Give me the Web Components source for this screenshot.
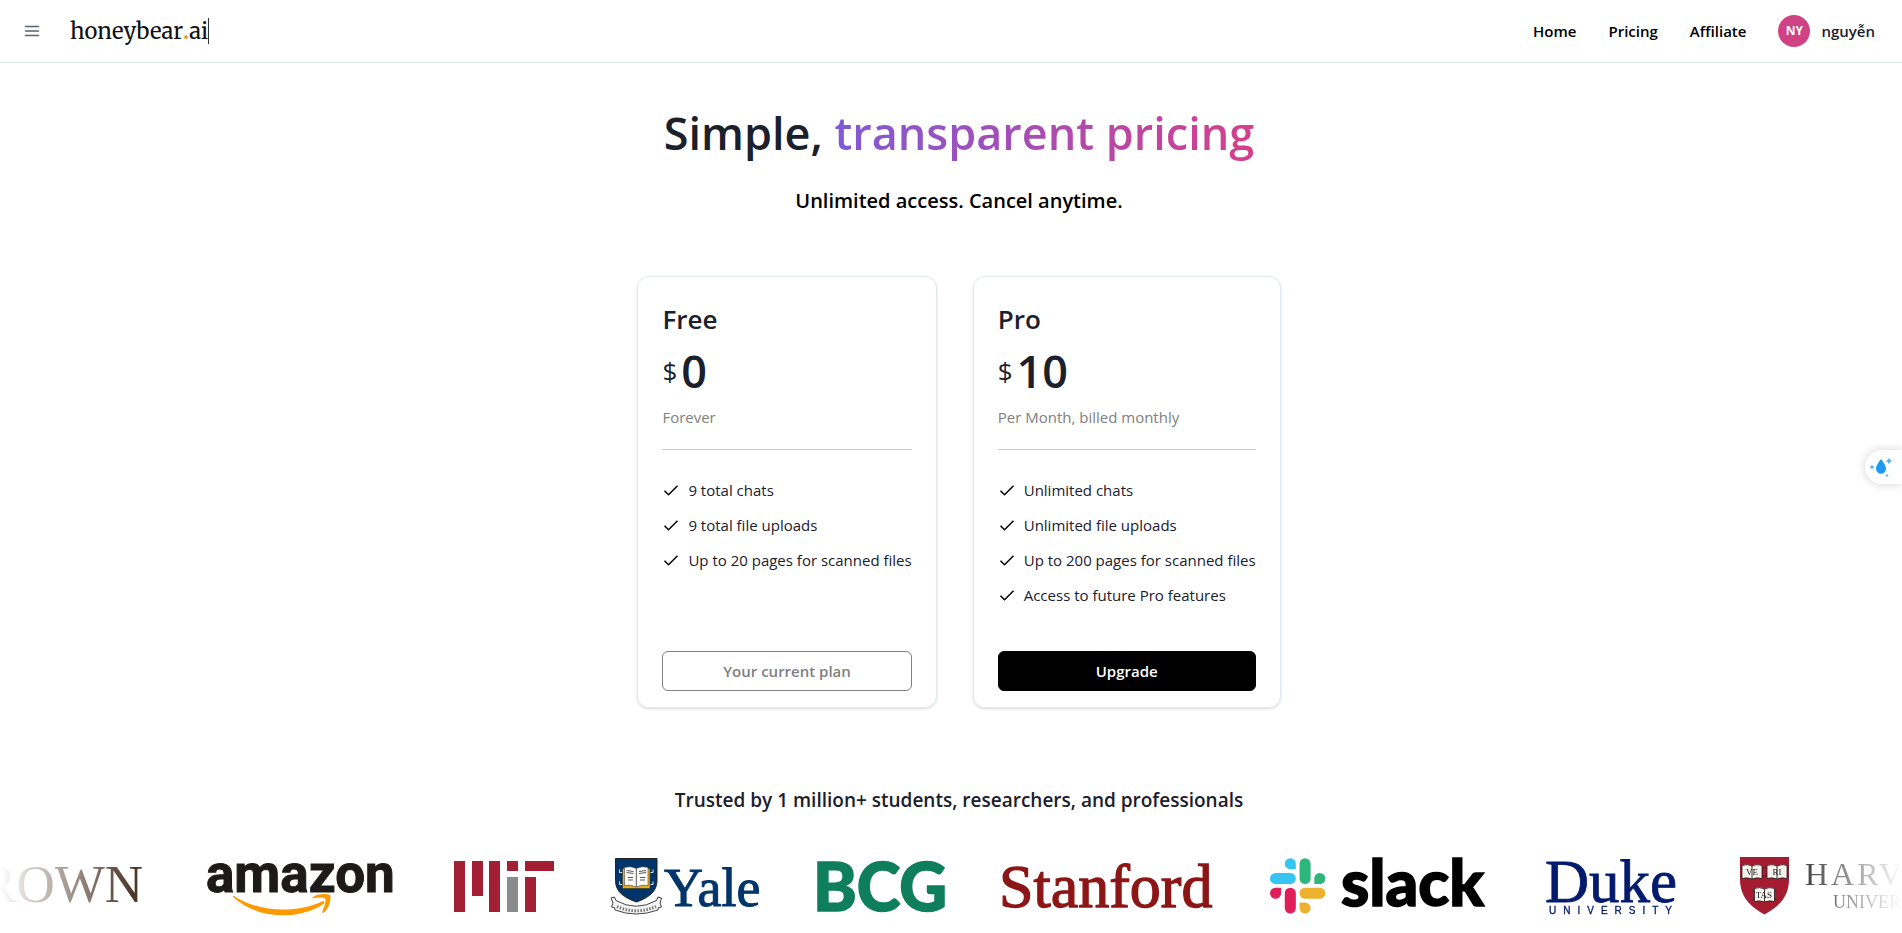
<!DOCTYPE html>
<html lang="en">
<head>
<meta charset="utf-8">
<meta name="viewport" content="width=device-width, initial-scale=1">
<title>Pricing - honeybear.ai</title>
<style>
:root {
  --ink: #1a202c;
  --line: #e2e8f0;
  --muted: #808080;
  --pink: #d53f8c;
  --purple: #805ad5;
}
body {
  margin: 0;
  background: #fff;
  color: var(--ink);
  font-family: "Segoe UI", "Open Sans", "Noto Sans", sans-serif;
  font-size: 15px;
  line-height: 24px;
  overflow-x: hidden;
}
main {
  padding-left: 16px;
}
</style>
</head>
<body>
<site-header>
  <nav-link href="#home">Home</nav-link>
  <nav-link href="#pricing">Pricing</nav-link>
  <nav-link href="#affiliate">Affiliate</nav-link>
  <user-badge slot="user" initials="NY">nguyễn</user-badge>
</site-header>

<main>
  <page-hero>
    Simple, <span slot="accent">transparent pricing</span>
    <span slot="sub">Unlimited access. Cancel anytime.</span>
  </page-hero>

  <plan-list>
    <plan-card name="Free" price="0" period="Forever" action="Your current plan" current>
      <plan-feature>9 total chats</plan-feature>
      <plan-feature>9 total file uploads</plan-feature>
      <plan-feature>Up to 20 pages for scanned files</plan-feature>
    </plan-card>
    <plan-card name="Pro" price="10" period="Per Month, billed monthly" action="Upgrade">
      <plan-feature>Unlimited chats</plan-feature>
      <plan-feature>Unlimited file uploads</plan-feature>
      <plan-feature>Up to 200 pages for scanned files</plan-feature>
      <plan-feature>Access to future Pro features</plan-feature>
    </plan-card>
  </plan-list>
</main>

<trusted-by>
  <span slot="title">Trusted by 1 million+ students, researchers, and professionals</span>
  <brand-logo name="brown"></brand-logo>
  <brand-logo name="amazon"></brand-logo>
  <brand-logo name="mit"></brand-logo>
  <brand-logo name="yale"></brand-logo>
  <brand-logo name="bcg"></brand-logo>
  <brand-logo name="stanford"></brand-logo>
  <brand-logo name="slack"></brand-logo>
  <brand-logo name="duke"></brand-logo>
  <brand-logo name="harvard"></brand-logo>
</trusted-by>

<side-tool></side-tool>

<script>
(function () {
  // small helper: define an element whose shadow root is cloned from markup
  function define(name, html, setup) {
    const template = document.createElement("template");
    template.innerHTML = html;
    class Thing extends HTMLElement {
      constructor() {
        super();
        this.attachShadow({ mode: "open" });
        this.shadowRoot.appendChild(template.content.cloneNode(true));
      }
      connectedCallback() {
        if (setup) setup(this, this.shadowRoot);
      }
    }
    window.customElements.define(name, Thing);
  }

  define("site-header", `
<style>
:host {
  display: block;
  border-bottom: 1px solid var(--line);
}
header {
  display: flex;
  align-items: center;
  height: 62px;
  padding: 0 27px 0 20px;
}
.menu {
  display: flex;
  width: 24px;
  height: 24px;
  margin-right: 26px;
  padding: 0;
  border: 0;
  background: none;
  align-items: center;
  justify-content: center;
}
.logo {
  display: flex;
  align-items: center;
  color: #111;
  font-family: Merriweather, "DejaVu Serif Condensed", "DejaVu Serif", serif;
  font-size: 22px;
  line-height: 26px;
  text-decoration: none;
  border-right: 1px solid #333;
}
.logo i {
  color: #d69e2e;
  font-style: normal;
  font-weight: 700;
}
nav {
  display: flex;
  align-items: center;
  gap: 32px;
  margin-left: auto;
}
</style>
<header>
  <button class="menu" aria-label="Open menu">
    <svg width="16" height="16" viewBox="0 0 16 16" fill="none" stroke="#5a6270" stroke-width="1.4" stroke-linecap="round">
      <path d="M1.500 3.500h13M1.500 8h13M1.500 12.500h13"/>
    </svg>
  </button>
  <a class="logo" href="#home"><span>honeybear<i>.</i>ai</span></a>
  <nav><slot></slot><slot name="user"></slot></nav>
</header>
`);

  define("nav-link", `
<style>
:host { display: block; }
a {
  color: #000;
  font-weight: 600;
  text-decoration: none;
}
</style>
<a><slot></slot></a>
`, function (el, root) {
    root.querySelector("a").href = el.getAttribute("href");
  });

  define("user-badge", `
<style>
:host {
  display: flex;
  align-items: center;
  gap: 11px;
  font-weight: 600;
}
.avatar {
  display: grid;
  place-items: center;
  width: 32px;
  height: 32px;
  border-radius: 50%;
  background: #d04283;
  color: #fff;
  font-size: 12px;
  font-weight: 700;
}
</style>
<span class="avatar"></span>
<span><slot></slot></span>
`, function (el, root) {
    root.querySelector(".avatar").textContent = el.getAttribute("initials");
  });

  define("page-hero", `
<style>
:host {
  display: block;
  padding-top: 42px;
  text-align: center;
}
h1 {
  margin: 0;
  font-size: 45px;
  line-height: 56px;
  font-weight: 600;
}
.accent {
  background: linear-gradient(to right, var(--purple), var(--pink));
  -webkit-background-clip: text;
  background-clip: text;
  color: transparent;
}
p {
  margin: 24px 0 0;
  color: #000;
  font-size: 20px;
  line-height: 32px;
  font-weight: 600;
}
</style>
<h1><slot></slot><span class="accent"><slot name="accent"></slot></span></h1>
<p><slot name="sub"></slot></p>
`);

  define("plan-list", `
<style>
:host {
  display: flex;
  flex-wrap: wrap;
  justify-content: center;
  gap: 36px;
  margin-top: 59px;
}
</style>
<slot></slot>
`);

  define("plan-card", `
<style>
:host {
  display: flex;
  flex-direction: column;
  padding: 24px 24px 16px;
  border: 1px solid var(--line);
  border-radius: 12px;
  box-shadow: 0 1px 3px rgba(0, 0, 0, 0.1), 0 1px 2px rgba(0, 0, 0, 0.06);
}
h2 {
  margin: 0;
  font-size: 26px;
  line-height: 36px;
  font-weight: 600;
}
.price {
  display: flex;
  align-items: center;
  gap: 4px;
  margin: 6px 0;
  font-size: 45px;
  line-height: 56px;
  font-weight: 600;
}
.price small {
  font-size: 26px;
  font-weight: 500;
}
.period { color: var(--muted); }
hr {
  width: 100%;
  margin: 20px 0 28px;
  border: 0;
  border-top: 1px solid #ccc;
}
ul {
  display: flex;
  flex-direction: column;
  flex: 1;
  gap: 11px;
  margin: 0 0 44px;
  padding: 0;
  list-style: none;
}
button {
  height: 40px;
  border: 1px solid #000;
  border-radius: 6px;
  background: #000;
  color: #fff;
  font: inherit;
  font-weight: 600;
}
:host([current]) button {
  border-color: var(--muted);
  background: #fff;
  color: var(--muted);
}
</style>
<h2></h2>
<div class="price"><small>$</small><span class="amount"></span></div>
<div class="period"></div>
<hr>
<ul role="list"><slot></slot></ul>
<button type="button"></button>
`, function (el, root) {
    root.querySelector("h2").textContent = el.getAttribute("name");
    root.querySelector(".amount").textContent = el.getAttribute("price");
    root.querySelector(".period").textContent = el.getAttribute("period");
    root.querySelector("button").textContent = el.getAttribute("action");
  });

  define("plan-feature", `
<style>
:host {
  display: flex;
  align-items: center;
  gap: 8px;
}
</style>
<svg width="18" height="18" viewBox="0 0 18 18" fill="none" stroke="#000" stroke-width="1.500">
  <path d="M2.500 9.800l4 3.900 9-9"/>
</svg>
<span><slot></slot></span>
`, function (el) {
    el.setAttribute("role", "listitem");
  });

  define("trusted-by", `
<style>
:host {
  display: block;
  margin-top: 78px;
}
h3 {
  margin: 0;
  padding-left: 16px;
  font-size: 19px;
  line-height: 28px;
  font-weight: 600;
  text-align: center;
}
.strip {
  display: flex;
  justify-content: center;
  gap: 48px;
  margin-top: 42px;
  overflow: hidden;
  -webkit-mask-image: linear-gradient(to right, transparent, #000 7%, #000 94%, transparent);
  mask-image: linear-gradient(to right, transparent, #000 7%, #000 94%, transparent);
}
</style>
<h3><slot name="title"></slot></h3>
<div class="strip"><slot></slot></div>
`);

  // every logo is drawn 60 units high, [width, markup]
  const book = `
    <path d="M-10-6.500Q-5-8.500 0-6 5-8.500 10-6.500V6.500Q5 5 0 7-5 5-10 6.500z" fill="#f6f3ee" stroke="#222" stroke-width=".8"/>
    <path d="M0-6V7M-12-4h2M-12 4h2M10-4h2M10 4h2" stroke="#222" stroke-width=".9"/>`;
  const logos = {
    brown: [238, `<text x="231" y="46" text-anchor="end" font-size="53" fill="#4e3629">BROWN</text>`],
    amazon: [202, `
      <text x="8" y="36" font-family="Roboto, sans-serif" font-weight="700" font-size="53" fill="#1d1b1a" stroke="#1d1b1a">amazon</text>
      <path d="M36 40C60 56 97 58 124 45.500C126 44.500 127.500 46.500 125.500 48C99 65 60 63 35.500 41.500C34.500 40.500 35 39.500 36 40z" fill="#f90"/>
      <path d="M114.500 41.500C119 37.500 128 37.500 132 39C134 43 130 54 126 56.500C124.500 57.500 124 56.500 124.500 55C127 49 128.500 44.500 127 42.500C124.500 41 119 41.500 115.500 42C114 42.500 113.500 42 114.500 41.500z" fill="#f90"/>`],
    mit: [108, `
      <g fill="#a31f34">
        <rect x="6" y="5" width="11" height="51"/>
        <rect x="24" y="5" width="11" height="35"/>
        <rect x="41" y="5" width="11" height="51"/>
        <rect x="59" y="5" width="11" height="10"/>
        <rect x="77" y="21" width="11" height="35"/>
        <rect x="77" y="5" width="29" height="10"/>
      </g>
      <rect x="59" y="21" width="11" height="35" fill="#8a8b8c"/>`],
    yale: [160, `
      <path d="M11.500 2.500h41.500v22c0 11-8 17-20.500 21.500C19.500 41.500 11.500 35.500 11.500 24.500z" fill="#00356b" stroke="#222"/>
      <path d="M18.500 12.500h27.500v20H18.500z" fill="#e8ae1c" stroke="#333" stroke-width=".6"/>
      <path d="M20.500 11.500Q26.500 9.500 32.300 12.500 38 9.500 44 11.500V29.500Q38 28 32.300 31 26.500 28 20.500 29.500z" fill="#fff" stroke="#444" stroke-width=".6"/>
      <path d="M32.300 12.500V31M22.500 14.500l7 1M22.500 16.500l7 1M35 15.500l7-1M35 17.500l7-1M24 21.500h5M24 24h5M36 21.500h5M36 24h5" stroke="#444" stroke-width=".9"/>
      <path d="M18 16.500h-2.500v-3M18 28.500h-2.500v-3M46.500 16.500h2.500v-3M46.500 28.500h2.500v-3" fill="none" stroke="#dfe5ec" stroke-width="1"/>
      <path d="M7 42l3.500-1 1.500 3.500Q32 56 52.500 44.500L54 41l3.500 1-1.500 5 1.500 4-3 .5-.5 2.500Q32 62 11 54l-.5-2.500-3-.5 1.500-4z" fill="#f4f4f4" stroke="#444" stroke-width="1"/>
      <path d="M13 50.500Q32 59 52 50.500" fill="none" stroke="#777" stroke-width="3" stroke-dasharray="1.500 1.500"/>
      <text x="60" y="50" font-size="54" fill="#00356b" stroke="#00356b">Yale</text>`],
    bcg: [136, `<text x="1" y="55" font-family="Lato, sans-serif" font-weight="900" font-size="66" fill="#0e7f5a" stroke="#0e7f5a" stroke-width="1.500">BCG</text>`],
    stanford: [222, `<text x="3" y="51" font-size="62" fill="#8c1515" stroke="#8c1515" stroke-width="1.300">Stanford</text>`],
    slack: [226, `
      <g transform="translate(4 2) scale(1.03)">
        <path d="M19.712.133a5.381 5.381 0 0 0-5.376 5.387 5.381 5.381 0 0 0 5.376 5.386h5.376V5.520A5.381 5.381 0 0 0 19.712.133m0 14.365H5.376A5.381 5.381 0 0 0 0 19.884a5.381 5.381 0 0 0 5.376 5.387h14.336a5.381 5.381 0 0 0 5.376-5.387 5.381 5.381 0 0 0-5.376-5.386" fill="#36c5f0"/>
        <path d="M53.760 19.884a5.381 5.381 0 0 0-5.376-5.386 5.381 5.381 0 0 0-5.376 5.386v5.387h5.376a5.381 5.381 0 0 0 5.376-5.387m-14.336 0V5.520A5.381 5.381 0 0 0 34.048.133a5.381 5.381 0 0 0-5.376 5.387v14.364a5.381 5.381 0 0 0 5.376 5.387 5.381 5.381 0 0 0 5.376-5.387" fill="#2eb67d"/>
        <path d="M34.048 54a5.381 5.381 0 0 0 5.376-5.387 5.381 5.381 0 0 0-5.376-5.386h-5.376v5.386A5.381 5.381 0 0 0 34.048 54m0-14.365h14.336a5.381 5.381 0 0 0 5.376-5.386 5.381 5.381 0 0 0-5.376-5.387H34.048a5.381 5.381 0 0 0-5.376 5.387 5.381 5.381 0 0 0 5.376 5.386" fill="#ecb22e"/>
        <path d="M0 34.249a5.381 5.381 0 0 0 5.376 5.386 5.381 5.381 0 0 0 5.376-5.386v-5.387H5.376A5.381 5.381 0 0 0 0 34.250m14.336 0v14.364A5.381 5.381 0 0 0 19.712 54a5.381 5.381 0 0 0 5.376-5.387V34.250a5.381 5.381 0 0 0-5.376-5.387 5.381 5.381 0 0 0-5.376 5.387" fill="#e01e5a"/>
      </g>
      <text x="75" y="50" font-family="Lato, sans-serif" font-weight="900" font-size="64" fill="#000" stroke="#000" stroke-width="1.500">slack</text>`],
    duke: [144, `
      <text x="5" y="46" font-size="61" fill="#001a6e" stroke="#001a6e" stroke-width=".8">Duke</text>
      <text x="9" y="58" font-family="'Liberation Sans', sans-serif" font-size="10" letter-spacing="7" fill="#001a6e" stroke="#001a6e" stroke-width=".3">UNIVERSITY</text>`],
    harvard: [258, `
      <path d="M8 1h49v22c0 17-9 27-24.500 35.500C17 50 8 40 8 23z" fill="#a51c30"/>
      <g transform="translate(20 16)">${book}</g>
      <g transform="translate(45 16)">${book}</g>
      <g transform="translate(32.500 39)">${book}</g>
      <g font-size="9" fill="#222" text-anchor="middle">
        <text x="20" y="19">VE</text>
        <text x="45" y="19">RI</text>
        <text x="32" y="42">TAS</text>
      </g>
      <text x="73" y="29" font-size="32" letter-spacing="3" fill="#1e1e1e">HARVARD</text>
      <text x="101" y="52" font-size="18" fill="#1e1e1e">UNIVERSITY</text>`]
  };

  define("brand-logo", `
<style>
:host {
  display: block;
  flex: none;
  height: 60px;
}
svg {
  display: block;
  overflow: visible;
  font-family: "Liberation Serif", serif;
}
</style>
<svg height="60"></svg>
`, function (el, root) {
    const [width, markup] = logos[el.getAttribute("name")];
    const svg = root.querySelector("svg");
    svg.setAttribute("width", width);
    svg.setAttribute("viewBox", "0 0 " + width + " 60");
    svg.innerHTML = markup;
  });

  define("side-tool", `
<style>
:host {
  position: fixed;
  top: 50%;
  right: 0;
  transform: translateY(-50%);
}
button {
  display: flex;
  align-items: center;
  width: 37px;
  height: 34px;
  padding: 0 0 0 4px;
  border: 0;
  border-radius: 17px 0 0 17px;
  background: #fff;
  box-shadow: 0 0 10px rgba(0, 0, 0, 0.18);
}
</style>
<button type="button" aria-label="Open assistant">
  <svg width="24" height="24" viewBox="0 0 24 24" fill="#1c9cf0">
    <path d="M12 4c2.500 3.500 5 6.500 5 9.500a5 5.200 0 0 1-10 0c0-3 2.500-6 5-9.500z"/>
    <g fill="#3db2f7">
      <path d="M20 2.500l1 2.500 2.500 1-2.500 1-1 2.500-1-2.500-2.500-1 2.500-1z"/>
      <path d="M3 9.500l.8 1.800 1.800.8-1.800.8L3 14.700l-.8-1.800-1.800-.8 1.800-.8z"/>
      <path d="M18 18.500l.6 1.400 1.400.6-1.400.6-.6 1.400-.6-1.400-1.400-.6 1.400-.6z"/>
    </g>
  </svg>
</button>
`);
})();
</script>
</body>
</html>
